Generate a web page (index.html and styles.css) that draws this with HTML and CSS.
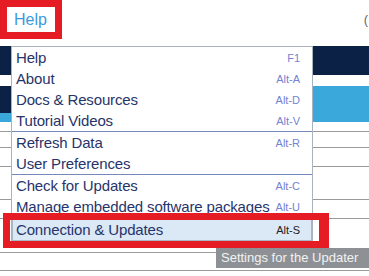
FILE: index.html
```html
<!DOCTYPE html>
<html lang="en">
<head>
  <meta charset="UTF-8">
  <title>Help Menu</title>
  <link rel="stylesheet" href="styles.css">
</head>
<body>

<header class="topbar">
  <span class="topbar-link">Help</span>
  <span class="topbar-edge">(</span>
</header>

<div class="page">
  <div class="band-navy"></div>
  <div class="band-gap"></div>
  <div class="band-blue"><div class="band-blue-strip"></div></div>
  <div class="row r1"></div>
  <div class="row r2"></div>
  <div class="row r3"></div>
  <div class="row r4"></div>
  <div class="row r5"></div>
  <div class="row r6"></div>
  <div class="row r7"></div>
</div>

<div class="mark mark-help"></div>

<ul class="menu">
  <li class="item"><span>Help</span><span class="key">F1</span></li>
  <li class="item"><span>About</span><span class="key">Alt-A</span></li>
  <li class="item"><span>Docs &amp; Resources</span><span class="key">Alt-D</span></li>
  <li class="item"><span>Tutorial Videos</span><span class="key">Alt-V</span></li>
  <li class="sep"></li>
  <li class="item"><span>Refresh Data</span><span class="key">Alt-R</span></li>
  <li class="item"><span>User Preferences</span><span class="key"></span></li>
  <li class="sep"></li>
  <li class="item"><span>Check for Updates</span><span class="key">Alt-C</span></li>
  <li class="item"><span>Manage embedded software packages</span><span class="key">Alt-U</span></li>
  <li class="item active"><span>Connection &amp; Updates</span><span class="key">Alt-S</span></li>
</ul>

<div class="mark mark-item"></div>

<div class="tooltip">Settings for the Updater</div>

</body>
</html>
```

FILE: styles.css
```css
body {
  font-family: "Liberation Sans", Arial, sans-serif;
  background: white;
  margin: 0;
  width: 369px;
  height: 276px;
  overflow: hidden;
  position: relative;
}

.topbar {
  height: 46px;
  display: flex;
  justify-content: space-between;
  align-items: flex-start;
  padding-left: 14px;
  padding-right: 1px;
  box-sizing: border-box;
}

.topbar-link {
  color: #3a9bda;
  font-size: 16px;
  margin-top: 11px;
}

.topbar-edge {
  color: #666;
  font-size: 13px;
  margin-top: 12px;
}

.band-navy {
  height: 29px;
  background: #0b2246;
}

.band-gap {
  height: 11px;
}

.band-blue {
  height: 36px;
  background: #3aa8db;
}

.band-blue-strip {
  width: 11px;
  height: 27px;
  background: #0b2246;
}

.row {
  border-bottom: 1px solid #9a9a9a;
}

.r1 { height: 9px; }
.r2 { height: 15px; }
.r3 { height: 18px; }
.r4 { height: 32px; }
.r5 { height: 18px; }
.r6 { height: 33px; }
.r7 { height: 17px; }

.menu {
  position: absolute;
  left: 11px;
  top: 46px;
  width: 302px;
  margin: 0;
  padding: 0;
  list-style: none;
  background: white;
  border-top: 1px solid #a9b3bf;
  border-left: 1px solid #a9b3bf;
  border-right: 1px solid #a9b3bf;
  box-sizing: border-box;
}

.item {
  height: 21px;
  display: flex;
  justify-content: space-between;
  align-items: center;
  padding: 0 12px 0 4px;
  font-size: 15px;
  letter-spacing: -0.15px;
  color: #27346a;
}

.key {
  font-size: 11px;
  letter-spacing: 0;
  color: #7383d2;
}

.sep {
  height: 1px;
  background: #7488bb;
}

.item.active {
  background: #dbe8f6;
  border: 1px solid #a8b6c8;
  height: 21px;
  margin-top: 1px;
  padding-left: 3px;
  padding-right: 11px;
}

.item.active .key {
  color: #222;
}

.mark {
  position: absolute;
  border: 7px solid #e51c23;
}

.mark-help {
  left: 0;
  top: 0;
  width: 48px;
  height: 25px;
}

.mark-item {
  left: 3px;
  top: 213px;
  width: 309px;
  height: 21px;
  border-right-width: 10px;
}

.tooltip {
  position: absolute;
  left: 216px;
  top: 248px;
  width: 153px;
  height: 20px;
  line-height: 20px;
  padding-left: 5px;
  box-sizing: border-box;
  background: #8d9196;
  color: #f2f2f2;
  font-size: 13px;
}
```
